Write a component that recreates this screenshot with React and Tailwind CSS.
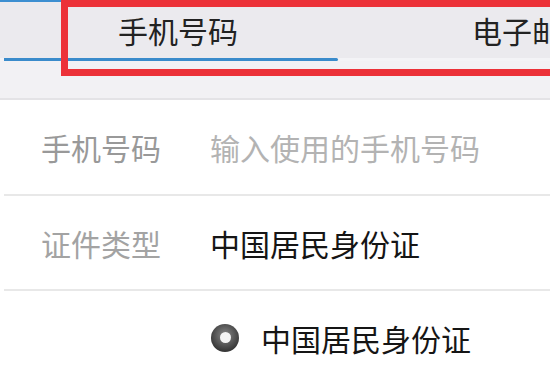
export default function App() {
  const font = { fontFamily: '"Noto Sans CJK SC", "Noto Sans", sans-serif' };
  return (
    <div className="relative w-[550px] h-[365px] overflow-hidden bg-white" style={font}>
      {/* tab bar */}
      <div className="h-[2px] bg-[#3d8fd1]" />
      <div className="flex h-[56px] bg-[#ebeaee] overflow-hidden">
        <div className="w-[338px] shrink-0 flex items-center pl-[118px] text-[30px] leading-none text-[#222]">手机号码</div>
        <div className="shrink-0 flex items-center pl-[134px] text-[30px] leading-none text-[#222] whitespace-nowrap">电子邮箱</div>
      </div>
      <div className="flex h-[3px] bg-[#f3f3f6]">
        <div className="ml-1 w-[334px] bg-[#3a8bcb] rounded-r-full" />
      </div>
      <div className="h-[39px] bg-[#f2f1f4] border-b-2 border-[#e4e3e6]" />

      {/* rows */}
      <div className="flex items-center h-[94px] text-[30px] leading-none">
        <div className="w-[210px] pl-[41px] text-[#999]">手机号码</div>
        <div className="text-[#b3b3b3]">输入使用的手机号码</div>
      </div>
      <div className="ml-1 h-[2px] bg-[#e8e8e8]" />
      <div className="flex items-center h-[93px] text-[30px] leading-none">
        <div className="w-[210px] pl-[41px] text-[#a3a3a3]">证件类型</div>
        <div className="text-[#151515]">中国居民身份证</div>
      </div>
      <div className="ml-1 h-[2px] bg-[#e8e8e8]" />
      <div className="flex items-center h-[93px] text-[30px] leading-none">
        <div className="ml-[211px] w-[28px] h-[28px] rounded-full bg-[radial-gradient(circle_at_50%_40%,#8a8a8a,#3a3a3a_70%,#222)] flex items-center justify-center">
          <div className="w-[11px] h-[11px] rounded-full bg-[#f4f4f4]" />
        </div>
        <div className="ml-[22px] text-[#151515]">中国居民身份证</div>
      </div>

      {/* red annotation box */}
      <div className="absolute left-[61px] top-0 w-[520px] h-[76px] border-[7px] border-[#ec3138]" />
    </div>
  );
}
